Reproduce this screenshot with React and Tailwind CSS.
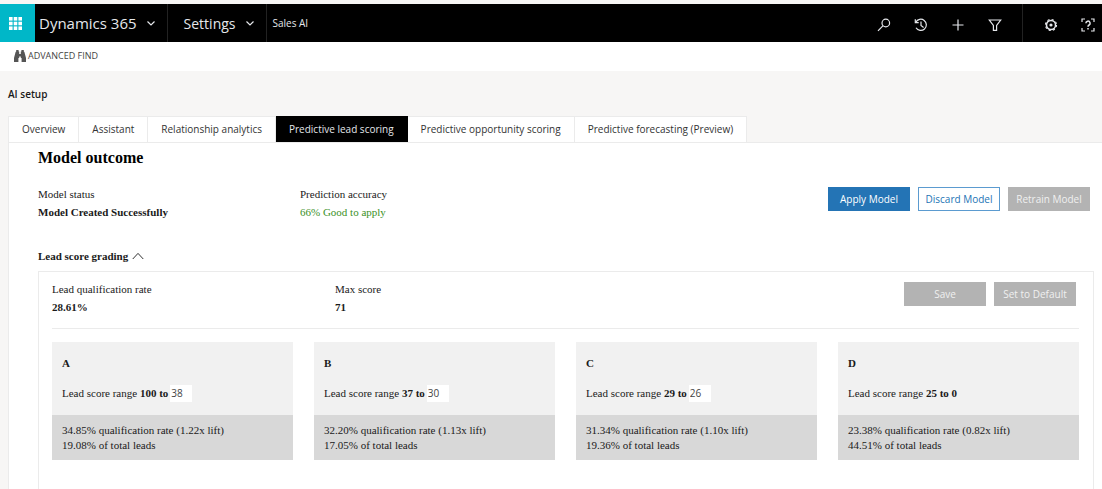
import React, { useState } from "react";

const SANS = "font-['Open_Sans','Noto_Sans',sans-serif]";

const TABS = [
  "Overview",
  "Assistant",
  "Relationship analytics",
  "Predictive lead scoring",
  "Predictive opportunity scoring",
  "Predictive forecasting (Preview)",
];

const GRADES = [
  { grade: "A", from: 100, to: 38, rate: "34.85%", lift: "1.22x", share: "19.08%" },
  { grade: "B", from: 37, to: 30, rate: "32.20%", lift: "1.13x", share: "17.05%" },
  { grade: "C", from: 29, to: 26, rate: "31.34%", lift: "1.10x", share: "19.36%" },
  { grade: "D", from: 25, to: 0, fixed: true, rate: "23.38%", lift: "0.82x", share: "44.51%" },
];

function Icon({ className = "size-4", width = 1.2, children }) {
  return (
    <svg
      viewBox="0 0 16 16"
      className={className}
      fill="none"
      stroke="currentColor"
      strokeWidth={width}
      aria-hidden="true"
    >
      {children}
    </svg>
  );
}

function Chevron() {
  return (
    <Icon className="size-2" width={2.4}>
      <path d="M1 5l7 7 7-7" />
    </Icon>
  );
}

function WaffleIcon() {
  return (
    <svg viewBox="0 0 13 13" className="size-[13px]" fill="#fff" aria-hidden="true">
      {[0, 4.7, 9.4].map((y) => [0, 4.7, 9.4].map((x) => (
        <rect key={`${x}-${y}`} x={x} y={y} width="3.600" height="3.600" />
      )))}
    </svg>
  );
}

function BinocularsIcon() {
  return (
    <svg viewBox="0 0 12 12" className="size-3" fill="#555" aria-hidden="true">
      <path d="M2.200 0h2.400v1.600h.6V4h1.600V1.600h.6V0h2.400v1.600l.6.400L12 8v4H7.600V8H6.800V6.500H5.200V8H4.400v4H0V8L1.600 2l.6-.4z" />
    </svg>
  );
}

const ACTIONS = [
  {
    label: "Search",
    icon: (
      <Icon>
        <circle cx="9.800" cy="6" r="3.800" />
        <path d="M7.100 8.700L2 13.800" />
      </Icon>
    ),
  },
  {
    label: "Recent items",
    icon: (
      <Icon>
        <path d="M2.800 5.200A5.600 5.600 0 1 1 3 10.800" />
        <path d="M2.300 2.300v3.400h3.400" />
        <path d="M8 4.600v3.800l2.600 2" />
      </Icon>
    ),
  },
  {
    label: "New",
    icon: (
      <Icon>
        <path d="M8 2.500v11M2.500 8h11" />
      </Icon>
    ),
  },
  {
    label: "Filter",
    icon: (
      <Icon>
        <path d="M2.300 3h11.400L9.600 8.400v5H6.400v-5z" />
      </Icon>
    ),
  },
];

function HeaderButton({ label, children }) {
  return (
    <button type="button" aria-label={label} className="flex items-center text-gray-200">
      {children}
    </button>
  );
}

function Header() {
  return (
    <header className={`flex h-[38px] bg-black text-gray-200 ${SANS}`}>
      <button
        type="button"
        aria-label="App launcher"
        className="flex w-[35px] shrink-0 items-center justify-center bg-[#00b7c8] pr-1"
      >
        <WaffleIcon />
      </button>
      <button type="button" className="flex items-center gap-[10px] pr-3 pl-1 text-[15px] whitespace-nowrap">
        Dynamics 365
        <Chevron />
      </button>
      <button
        type="button"
        className="flex items-center gap-[10px] border-x border-[#222] pr-3 pl-4 text-[14px] whitespace-nowrap"
      >
        Settings
        <Chevron />
      </button>
      <a href="#sales-ai" className="flex items-center px-[6px] text-[10px] whitespace-nowrap">
        Sales AI
      </a>
      <div className="ml-auto flex gap-[21px] pt-1 pr-[19px]">
        {ACTIONS.map((a) => (
          <HeaderButton key={a.label} label={a.label}>{a.icon}</HeaderButton>
        ))}
      </div>
      <div className="flex gap-[21px] border-l border-[#222] pt-1 pr-[6px] pl-5">
        <HeaderButton label="Settings menu">
          <Icon>
            <circle cx="8" cy="8" r="4.500" strokeWidth="1.500" />
            <circle cx="8" cy="8" r="5.500" strokeWidth="1.200" strokeDasharray="2.160 2.160" />
            <circle cx="8" cy="8" r="1.600" fill="currentColor" stroke="none" />
          </Icon>
        </HeaderButton>
        <HeaderButton label="Help">
          <Icon>
            <path d="M2 5V2h3M11 2h3v3M14 11v3h-3M5 14H2v-3" />
            <path d="M5.900 6.300a2.100 2.100 0 1 1 3.200 1.700C8.300 8.500 8 8.900 8 9.800" strokeWidth="1.500" />
            <path d="M8 11v1.500" strokeWidth="1.500" />
          </Icon>
        </HeaderButton>
      </div>
    </header>
  );
}

function Stat({ label, value, tone = "font-bold", className = "" }) {
  return (
    <dl className={className}>
      <dt>{label}</dt>
      <dd className={tone}>{value}</dd>
    </dl>
  );
}

function ActionButton({ variant = "muted", children }) {
  const look = {
    primary: "border-[#2474b5] bg-[#2474b5] text-white",
    outline: "border-[#5b9bd0] bg-white text-[#2474b5]",
    muted: "border-[#b3b3b3] bg-[#b3b3b3] text-[#f0f0f0]",
  }[variant];
  return (
    <button
      type="button"
      disabled={variant === "muted"}
      className={`h-6 w-[82px] border text-[10px] leading-4 whitespace-nowrap ${SANS} ${look}`}
    >
      {children}
    </button>
  );
}

function GradeCard({ item }) {
  const [value, setValue] = useState(String(item.to));
  const id = `range-${item.grade}`;
  return (
    <article>
      <div className="h-[73px] bg-[#f1f1f1] px-[10px] pt-3">
        <h3 className="leading-[18px] font-bold">{item.grade}</h3>
        <div className="mt-3 flex items-center gap-[2px] leading-[18px]">
          <label htmlFor={item.fixed ? undefined : id}>
            Lead score range{" "}
            <b>
              {item.from} to {item.fixed ? item.to : ""}
            </b>
          </label>
          {!item.fixed && (
            <input
              id={id}
              value={value}
              onChange={(e) => setValue(e.target.value)}
              className={`h-[17px] w-[22px] bg-white px-px text-[10px] text-[#444] ${SANS}`}
            />
          )}
        </div>
      </div>
      <div className="h-[45px] bg-[#d8d8d8] px-[10px] pt-2 leading-[15px]">
        <p>{item.rate} qualification rate ({item.lift} lift)</p>
        <p>{item.share} of total leads</p>
      </div>
    </article>
  );
}

export default function App() {
  const [tab, setTab] = useState(3);
  return (
    <div className="flex min-h-screen flex-col bg-[#f7f6f5] pt-1 text-[#1a1a1a]">
      <Header />
      <div className={`flex h-[29px] items-center bg-white px-[14px] pb-[2px] ${SANS}`}>
        <button type="button" className="flex items-center gap-[2px] text-[9px] text-[#444]">
          <BinocularsIcon />
          ADVANCED FIND
        </button>
      </div>
      <h1 className={`px-2 pt-[15px] text-[10px] leading-4 font-semibold ${SANS}`}>AI setup</h1>

      <main className="mt-[14px] flex grow flex-col pl-2">
        <div role="tablist" className={`flex text-[10px] text-[#333] ${SANS}`}>
          {TABS.map((name, i) => (
            <button
              key={name}
              type="button"
              role="tab"
              aria-selected={i === tab}
              onClick={() => setTab(i)}
              className={`h-[26px] border-t border-r px-[13px] whitespace-nowrap first:border-l ${
                i === tab ? "border-black bg-black text-gray-200" : "border-[#ebebeb] bg-white"
              }`}
            >
              {name}
            </button>
          ))}
        </div>

        <section className="grow border-t border-l border-[#ebebeb] bg-white pr-2 pl-[29px] font-['Liberation_Serif',serif] text-[11px] leading-[18px]">
          <h2 className="pt-[5px] text-[16px] leading-5 font-bold text-black">Model outcome</h2>

          <div className="mt-[17px] flex items-start pr-1">
            <Stat className="w-[262px]" label="Model status" value="Model Created Successfully" />
            <Stat label="Prediction accuracy" value="66% Good to apply" tone="text-[#3c9127]" />
            <div className="mt-[2px] ml-auto flex gap-2">
              <ActionButton variant="primary">Apply Model</ActionButton>
              <ActionButton variant="outline">Discard Model</ActionButton>
              <ActionButton>Retrain Model</ActionButton>
            </div>
          </div>

          <button type="button" aria-expanded="true" className="mt-[26px] flex items-center gap-1 font-bold">
            Lead score grading
            <Icon className="size-3">
              <path d="M1 12l7-7.500 7 7.500" />
            </Icon>
          </button>

          <div className="mt-[6px] border border-[#ebebeb] pt-2 pr-[14px] pb-12 pl-[13px]">
            <div className="flex items-start border-b border-[#ebebeb] pr-[3px] pb-3">
              <Stat className="w-[283px]" label="Lead qualification rate" value="28.61%" />
              <Stat label="Max score" value="71" />
              <div className="mt-[2px] ml-auto flex gap-2">
                <ActionButton>Save</ActionButton>
                <ActionButton>Set to Default</ActionButton>
              </div>
            </div>
            <div className="mt-[13px] grid grid-cols-4 gap-[21px]">
              {GRADES.map((g) => (
                <GradeCard key={g.grade} item={g} />
              ))}
            </div>
          </div>
        </section>
      </main>
    </div>
  );
}
